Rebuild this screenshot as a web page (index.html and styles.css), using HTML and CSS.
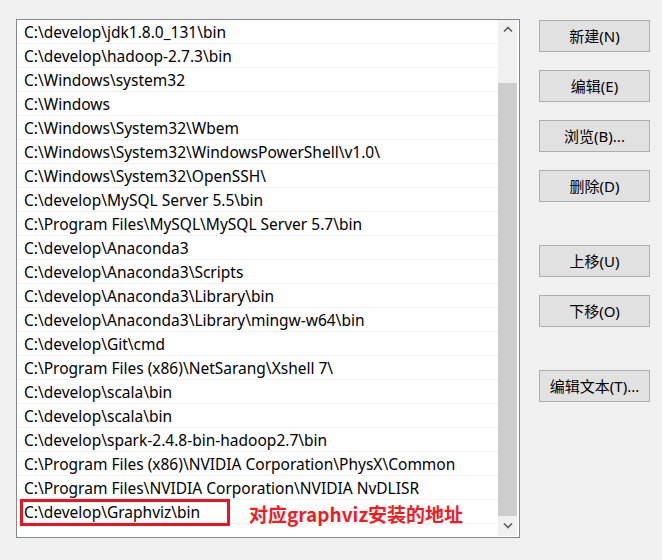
FILE: index.html
```html
<!DOCTYPE html>
<html lang="zh-CN">
<head>
    <meta charset="UTF-8">
    <title>编辑环境变量</title>
    <link rel="stylesheet" href="styles.css">
</head>
<body>
    <div class="dialog">
        <div class="path-list">
            <div class="rows">
                <div class="row">C:\develop\jdk1.8.0_131\bin</div>
                <div class="row">C:\develop\hadoop-2.7.3\bin</div>
                <div class="row">C:\Windows\system32</div>
                <div class="row">C:\Windows</div>
                <div class="row">C:\Windows\System32\Wbem</div>
                <div class="row">C:\Windows\System32\WindowsPowerShell\v1.0\</div>
                <div class="row">C:\Windows\System32\OpenSSH\</div>
                <div class="row">C:\develop\MySQL Server 5.5\bin</div>
                <div class="row">C:\Program Files\MySQL\MySQL Server 5.7\bin</div>
                <div class="row">C:\develop\Anaconda3</div>
                <div class="row">C:\develop\Anaconda3\Scripts</div>
                <div class="row">C:\develop\Anaconda3\Library\bin</div>
                <div class="row">C:\develop\Anaconda3\Library\mingw-w64\bin</div>
                <div class="row">C:\develop\Git\cmd</div>
                <div class="row">C:\Program Files (x86)\NetSarang\Xshell 7\</div>
                <div class="row">C:\develop\scala\bin</div>
                <div class="row">C:\develop\scala\bin</div>
                <div class="row">C:\develop\spark-2.4.8-bin-hadoop2.7\bin</div>
                <div class="row">C:\Program Files (x86)\NVIDIA Corporation\PhysX\Common</div>
                <div class="row">C:\Program Files\NVIDIA Corporation\NVIDIA NvDLISR</div>
                <div class="row">C:\develop\Graphviz\bin</div>
            </div>
            <div class="scrollbar">
                <div class="arrow">
                    <svg width="10" height="6" viewBox="0 0 10 6"><path d="M1 5.5 L5 1.5 L9 5.5" fill="none" stroke="#606060" stroke-width="1.6"/></svg>
                </div>
                <div class="track"><div class="thumb"></div></div>
                <div class="arrow down">
                    <svg width="10" height="6" viewBox="0 0 10 6"><path d="M1 0.5 L5 4.5 L9 0.5" fill="none" stroke="#606060" stroke-width="1.6"/></svg>
                </div>
            </div>
            <!-- annotation drawn on top of the list -->
            <div class="mark-box"></div>
            <div class="mark-text">对应graphviz安装的地址</div>
        </div>
        <div class="actions">
            <button>新建(N)</button>
            <button>编辑(E)</button>
            <button>浏览(B)...</button>
            <button>删除(D)</button>
            <button class="gap">上移(U)</button>
            <button>下移(O)</button>
            <button class="gap">编辑文本(T)...</button>
        </div>
    </div>
</body>
</html>
```

FILE: styles.css
```css
body {
    margin: 0;
    background-color: #f0f0f0;
    font-family: "Noto Sans", "Noto Sans CJK SC", sans-serif;
}

.dialog {
    display: flex;
    align-items: flex-start;
    padding: 19px 0 0 16px;
}

.path-list {
    position: relative;
    display: flex;
    width: 502px;
    height: 517px;
    border: 1px solid #828790;
    background-color: #fff;
}

.rows {
    width: 481px;
    display: flex;
    flex-direction: column;
}

.row {
    height: 21px;
    line-height: 21px;
    padding: 2px 0 0 7px;
    border-bottom: 1px solid #f0f0f0;
    font-size: 15.5px;
    color: #000;
    white-space: nowrap;
}

.scrollbar {
    width: 19px;
    height: 516px;
    display: flex;
    flex-direction: column;
    background-color: #f0f0f0;
}

.arrow {
    height: 17px;
    display: flex;
    align-items: center;
    justify-content: center;
}

.arrow.down {
    height: 20px;
}

.track {
    flex: 1;
    padding-top: 46px;
    display: flex;
}

.thumb {
    flex: 1;
    background-color: #cdcdcd;
}

.mark-box {
    position: absolute;
    left: 3px;
    top: 479px;
    width: 204px;
    height: 21px;
    border: 3px solid #e8141f;
}

.mark-text {
    position: absolute;
    left: 232px;
    top: 482px;
    font-family: "Noto Sans CJK SC", sans-serif;
    font-size: 19px;
    font-weight: bold;
    color: #ee1c25;
    line-height: 24px;
}

.actions {
    display: flex;
    flex-direction: column;
    margin-left: 19px;
    margin-top: 1px;
}

button {
    width: 111px;
    height: 32px;
    margin-bottom: 18px;
    padding: 0 0 1px;
    border: 1px solid #adadad;
    background-color: #e1e1e1;
    color: #000;
    font-family: "Noto Sans", "Noto Sans CJK SC", sans-serif;
    font-size: 15px;
}

button.gap {
    margin-top: 25px;
}
```
